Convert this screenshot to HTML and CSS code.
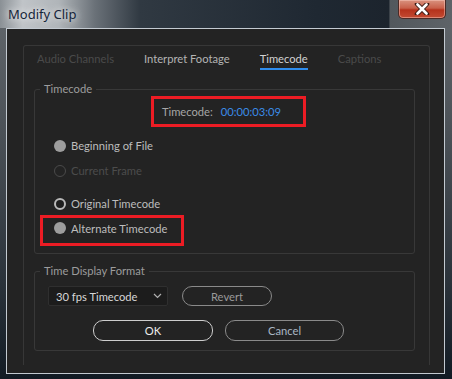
FILE: index.html
```html
<!DOCTYPE html>
<html lang="en">
<head>
    <meta charset="UTF-8">
    <title>Modify Clip</title>
    <link rel="stylesheet" href="styles.css">
</head>
<body>
    <div class="window">
        <div class="titlebar">
            <span class="title">Modify Clip</span>
            <button class="close" title="Close">
                <svg width="20" height="12" viewBox="0 0 20 12">
                    <path d="M5 1 L15 11 M15 1 L5 11" stroke="#3a1a14" stroke-width="4.5" stroke-linecap="round"/>
                    <path d="M5.5 1.5 L14.5 10.5 M14.5 1.5 L5.5 10.5" stroke="#ffffff" stroke-width="2.6" stroke-linecap="round"/>
                </svg>
            </button>
        </div>

        <div class="client">
            <div class="panel">
                <!-- pestañas -->
                <div class="tabs">
                    <span class="tab disabled">Audio Channels</span>
                    <span class="tab">Interpret Footage</span>
                    <span class="tab active">Timecode</span>
                    <span class="tab disabled">Captions</span>
                </div>

                <fieldset class="group">
                    <legend>Timecode</legend>
                    <div class="tc-row">
                        <div class="tc-box mark">
                            <span class="tc-label">Timecode:</span>
                            <span class="tc-value">00:00:03:09</span>
                        </div>
                    </div>

                    <div class="radios">
                        <label class="radio"><span class="dot filled"></span>Beginning of File</label>
                        <label class="radio disabled"><span class="dot"></span>Current Frame</label>
                        <label class="radio spaced"><span class="dot ring"></span>Original Timecode</label>
                        <label class="radio mark alt"><span class="dot filled"></span>Alternate Timecode</label>
                    </div>
                </fieldset>

                <fieldset class="group group-format">
                    <legend>Time Display Format</legend>
                    <div class="format-row">
                        <div class="select">
                            <span>30 fps Timecode</span>
                            <svg width="9" height="6" viewBox="0 0 9 6">
                                <path d="M1 1 L4.5 4.5 L8 1" fill="none" stroke="#b0b0b0" stroke-width="1.2"/>
                            </svg>
                        </div>
                        <button class="btn btn-revert">Revert</button>
                    </div>
                    <div class="actions">
                        <button class="btn btn-ok">OK</button>
                        <button class="btn btn-cancel">Cancel</button>
                    </div>
                </fieldset>
            </div>
        </div>
    </div>
</body>
</html>
```

FILE: styles.css
```css
html,
body {
    margin: 0;
    padding: 0;
    background: #18212a;
}

body {
    font-family: 'Lato', 'Noto Sans', sans-serif;
    font-size: 11.2px;
}

.window {
    width: 452px;
    height: 379px;
    background: linear-gradient(180deg, #63686d 0%, #4b5157 35%, #2a323a 75%, #121b24 100%);
    overflow: hidden;
}

/* Barra de titulo */
.titlebar {
    height: 28px;
    display: flex;
    align-items: flex-start;
    justify-content: space-between;
    background: linear-gradient(90deg, #8a9095 0%, #c0c4c8 5%, #b0b5b9 13%, #6a7178 21%, #303942 31%, #1f2832 70%, #1c242d 86%, #52585d 86.3%, #5e6368 100%);
}

.title {
    font-family: 'Noto Sans', sans-serif;
    font-size: 13px;
    color: #16253a;
    line-height: 28px;
    padding-left: 8px;
    text-shadow: 0 0 6px rgba(255, 255, 255, 0.8), 0 0 12px rgba(255, 255, 255, 0.6);
}

.close {
    width: 48px;
    height: 19px;
    margin-right: 6px;
    padding: 0;
    display: flex;
    align-items: center;
    justify-content: center;
    border: 1px solid #4a2a26;
    border-top: none;
    border-radius: 0 0 5px 5px;
    background: linear-gradient(180deg, #d9927f 0%, #c8604a 45%, #b5321c 55%, #c24a32 100%);
    box-shadow: inset 0 0 0 1px rgba(255, 210, 200, 0.45);
}

/* Area del dialogo */
.client {
    margin-left: 6px;
    width: 421px;
    height: 328px;
    border: 1px solid #c3cad1;
    background: #232323;
    padding: 16px 0 0 16px;
}

.panel {
    width: 405px;
    height: 319px;
    border: 1px solid #373737;
    border-bottom: none;
    border-radius: 3px 3px 0 0;
}

.tabs {
    display: flex;
    gap: 30px;
    padding-left: 13px;
}

.tab {
    padding: 5px 0 1px;
    line-height: 16px;
    border-bottom: 2px solid transparent;
    color: #b4b4b4;
}

.tab.disabled {
    color: #4a4a4a;
}

.tab.active {
    color: #d2d2d2;
    border-bottom-color: #2f8ded;
}

/* Grupos */
.group {
    margin: 12px 14px 0 10px;
    padding: 0;
    border: 1px solid #383838;
    border-radius: 3px;
    min-width: 0;
}

.group legend {
    margin-left: 5px;
    padding: 0 4px;
    line-height: 14px;
    color: #9c9c9c;
}

.mark {
    border: 3px solid #ec1c24;
}

.tc-row {
    display: flex;
    justify-content: center;
    padding-left: 8px;
}

.tc-box {
    display: flex;
    align-items: center;
    gap: 8px;
    height: 25px;
    padding: 0 22px 0 8px;
}

.tc-label {
    color: #a6a6a6;
}

.tc-value {
    color: #3b8ce8;
}

.radios {
    display: flex;
    flex-direction: column;
    align-items: flex-start;
    padding: 6px 0 7px;
}

.radio {
    display: flex;
    align-items: center;
    gap: 5px;
    height: 25px;
    padding-left: 19px;
    color: #bdbdbd;
}

.radio.disabled {
    color: #4c4c4c;
}

.radio.spaced {
    margin-top: 8px;
}

.radio.alt {
    height: 20px;
    margin-left: 5px;
    margin-top: -1px;
    padding: 0 14px 5px 11px;
}

.dot {
    width: 12px;
    height: 12px;
    border-radius: 50%;
    box-sizing: border-box;
    border: 1.5px solid #4a4a4a;
}

.dot.filled {
    border: none;
    background: #9d9d9d;
}

.dot.ring {
    border: 2px solid #b9b9b9;
    background: #1e1e1e;
}

.group-format {
    margin-top: 10px;
}

.format-row {
    display: flex;
    align-items: center;
    gap: 14px;
    padding: 8px 0 0 13px;
}

.select {
    width: 120px;
    height: 20px;
    box-sizing: border-box;
    display: flex;
    align-items: center;
    justify-content: space-between;
    padding: 0 5px 0 7px;
    background: #1c1c1c;
    border: 1px solid #2f2f2f;
    border-radius: 2px;
    color: #d6d6d6;
}

.btn {
    font-family: inherit;
    font-size: 11.2px;
    background: transparent;
    border: 1px solid #8a8a8a;
    border-radius: 10px;
    padding: 0;
    box-sizing: border-box;
}

.btn-revert {
    width: 90px;
    height: 20px;
    color: #9a9a9a;
}

.actions {
    display: flex;
    gap: 12px;
    padding: 14px 0 9px 58px;
}

.btn-ok,
.btn-cancel {
    width: 120px;
    height: 21px;
}

.btn-ok {
    border-color: #cdcdcd;
    color: #ececec;
}

.btn-cancel {
    width: 119px;
    color: #a9b6c4;
}
```
